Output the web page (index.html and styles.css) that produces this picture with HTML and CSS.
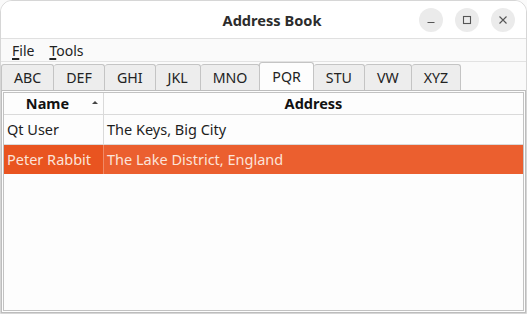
FILE: index.html
```html
<!DOCTYPE html>
<html lang="en">

<head>
    <meta charset="UTF-8">
    <title>Address Book</title>
    <link rel="stylesheet" href="styles.css">
</head>

<body>
    <div class="window">
        <div class="titlebar">
            <span class="title">Address Book</span>
            <div class="controls">
                <button class="ctl" title="Minimize">
                    <svg width="10" height="10" viewBox="0 0 10 10"><path d="M1.5 7.5h7" stroke="#555" stroke-width="1.2"/></svg>
                </button>
                <button class="ctl" title="Maximize">
                    <svg width="10" height="10" viewBox="0 0 10 10"><rect x="1.5" y="1.5" width="7" height="7" fill="none" stroke="#555" stroke-width="1.1"/></svg>
                </button>
                <button class="ctl" title="Close">
                    <svg width="10" height="10" viewBox="0 0 10 10"><path d="M1.5 1.5l7 7M8.5 1.5l-7 7" stroke="#555" stroke-width="1.1"/></svg>
                </button>
            </div>
        </div>

        <div class="menubar">
            <span class="menu"><u>F</u>ile</span>
            <span class="menu"><u>T</u>ools</span>
        </div>

        <div class="tabbar">
            <div class="tab">ABC</div>
            <div class="tab">DEF</div>
            <div class="tab">GHI</div>
            <div class="tab">JKL</div>
            <div class="tab">MNO</div>
            <div class="tab active">PQR</div>
            <div class="tab">STU</div>
            <div class="tab">VW</div>
            <div class="tab">XYZ</div>
        </div>

        <div class="pane">
            <div class="table">
                <div class="row header">
                    <div class="cell name">Name<span class="sort"></span></div>
                    <div class="cell address">Address</div>
                </div>
                <div class="row">
                    <div class="cell name">Qt User</div>
                    <div class="cell address">The Keys, Big City</div>
                </div>
                <div class="row selected">
                    <div class="cell name">Peter Rabbit</div>
                    <div class="cell address">The Lake District, England</div>
                </div>
            </div>
        </div>
    </div>
</body>

</html>
```

FILE: styles.css
```css
html, body {
    margin: 0;
    padding: 0;
    background: #fafafa;
}

body {
    font-family: "Noto Sans", "Open Sans", sans-serif;
    font-size: 14.5px;
    color: #1e1e1e;
}

.window {
    width: 525px;
    height: 312px;
    border: 1px solid #d6d6d6;
    border-radius: 12px 12px 0 0;
    background: #fafafa;
    display: flex;
    flex-direction: column;
    overflow: hidden;
}

.titlebar {
    height: 37px;
    flex: none;
    background: #ffffff;
    border-bottom: 1px solid #e0e0e0;
    display: flex;
    align-items: center;
    justify-content: center;
    position: relative;
}

.title {
    font-weight: bold;
    font-size: 14.6px;
    color: #2c2c2c;
    margin-left: 17px;
}

.controls {
    position: absolute;
    right: 11px;
    top: 7px;
    display: flex;
    gap: 12px;
}

.ctl {
    width: 24px;
    height: 24px;
    border-radius: 50%;
    border: none;
    padding: 0;
    background: #ebebeb;
    display: flex;
    align-items: center;
    justify-content: center;
}

.menubar {
    height: 22px;
    flex: none;
    border-bottom: 1px solid #e2e2e2;
    display: flex;
    align-items: center;
    gap: 15px;
    padding-left: 11px;
    font-size: 14px;
}

.menu {
    color: #222;
}

.menu u {
    text-decoration-thickness: 2px;
    text-underline-offset: 2px;
}

.tabbar {
    height: 28px;
    flex: none;
    display: flex;
    align-items: flex-end;
}

.tab {
    height: 26px;
    box-sizing: border-box;
    padding: 0 12px;
    border: 1px solid #c4c4c4;
    border-bottom: none;
    border-left: none;
    border-radius: 3px 3px 0 0;
    background: #ededed;
    display: flex;
    align-items: center;
    color: #222;
    font-size: 14.2px;
}

.tab:first-child {
    border-left: 1px solid #c4c4c4;
}

.tab.active {
    height: 28px;
    background: #fdfdfd;
    border-left: 1px solid #c4c4c4;
    margin-left: -1px;
}

.pane {
    flex: 1;
    border: 1px solid #bdbdbd;
    padding: 1px;
    background: #fdfdfd;
    display: flex;
}

.table {
    flex: 1;
    border: 1px solid #c2c2c2;
    background: #fdfdfd;
}

.row {
    display: flex;
    height: 29px;
    border-bottom: 1px solid #dadada;
}

.row.header {
    height: 21px;
    font-weight: bold;
    color: #111;
}

.cell {
    display: flex;
    align-items: center;
    padding-left: 3px;
    padding-bottom: 2px;
    box-sizing: border-box;
}

.cell.name {
    width: 100px;
    border-right: 1px solid #dadada;
}

.cell.address {
    flex: 1;
}

.header .cell {
    justify-content: center;
    padding-left: 0;
    padding-bottom: 1px;
    position: relative;
}

.header .cell.name {
    padding-right: 12px;
}

.sort {
    position: absolute;
    right: 5px;
    top: 8px;
    width: 0;
    height: 0;
    border-left: 3px solid transparent;
    border-right: 3px solid transparent;
    border-bottom: 3px solid #444;
}

.row.selected {
    border-bottom: none;
    color: #fbe3d9;
}

.selected .cell.name {
    background: #e95420;
    border-right-color: #f08a66;
}

.selected .cell.address {
    background: #eb5f2f;
}
```
